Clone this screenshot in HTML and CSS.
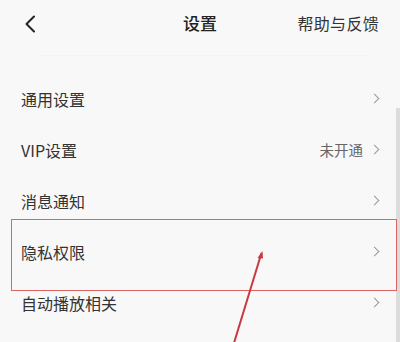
FILE: index.html
```html
<!DOCTYPE html>
<html lang="zh-CN">
<head>
<meta charset="utf-8">
<link rel="stylesheet" href="styles.css">
</head>
<body>
<div class="screen">
  <header class="topbar">
    <span class="back">
      <svg width="12" height="18" viewBox="0 0 12 18"><path d="M10 1.5 L2.5 9 L10 16.5" fill="none" stroke="#222" stroke-width="2" stroke-linecap="round" stroke-linejoin="round"/></svg>
    </span>
    <span class="title">设置</span>
    <span class="help">帮助与反馈</span>
  </header>
  <div class="divider"></div>
  <ul class="list">
    <li class="row"><span class="label">通用设置</span><span class="chev"></span></li>
    <li class="row"><span class="label">VIP设置</span><span class="value">未开通</span><span class="chev"></span></li>
    <li class="row"><span class="label">消息通知</span><span class="chev"></span></li>
    <li class="row"><span class="label">隐私权限</span><span class="chev"></span></li>
    <li class="row"><span class="label">自动播放相关</span><span class="chev"></span></li>
  </ul>
  <div class="scrollbar"></div>
  <div class="highlight"></div>
  <svg class="arrow" width="400" height="342" viewBox="0 0 400 342">
    <path d="M234 343 L261.5 253" fill="none" stroke="#c83a3f" stroke-width="2"/>
    <path d="M262.5 251 L257.5 258 L263 258.5 Z" fill="#c83a3f"/>
  </svg>
</div>
</body>
</html>
```
FILE: styles.css
```css
* { box-sizing: border-box; margin: 0; padding: 0; }
html, body { width: 400px; height: 342px; overflow: hidden; }
body {
  background: #f8f8f8;
  font-family: "Noto Sans CJK SC", "Noto Sans", sans-serif;
  color: #333;
}
.screen { position: relative; width: 400px; height: 342px; }
.topbar {
  height: 46px;
  display: flex;
  align-items: center;
  justify-content: space-between;
  padding: 0 21px 0 24px;
  position: relative;
}
.back { display: flex; width: 12px; height: 18px; margin-top: 1px; }
.title {
  position: absolute;
  left: 0; right: 0;
  text-align: center;
  font-size: 17px;
  font-weight: 500;
  color: #222;
  line-height: 46px;
  pointer-events: none;
}
.help { font-size: 16px; color: #333; letter-spacing: 0.3px; }
.divider {
  height: 1px;
  margin: 9px 30px 0 37px;
  background: #f4f4f4;
}
.list { list-style: none; margin-top: 17px; }
.row {
  height: 51px;
  display: flex;
  align-items: center;
  padding: 0 20px 0 21px;
}
.label { flex: 1; font-size: 16px; color: #333; }
.value { font-size: 14.5px; color: #666; margin-right: 8px; }
.chev {
  width: 7px; height: 7px;
  border-right: 1.5px solid #999;
  border-top: 1.5px solid #999;
  transform: rotate(45deg);
  margin-right: 2px;
}
.scrollbar {
  position: absolute;
  left: 396px; top: 108px;
  width: 4px; height: 234px;
  background: #dcdcdc;
}
.highlight {
  position: absolute;
  left: 11px; top: 219px;
  width: 386px; height: 72px;
  border: 1.5px solid #de6464;
}
.arrow { position: absolute; left: 0; top: 0; }
```
